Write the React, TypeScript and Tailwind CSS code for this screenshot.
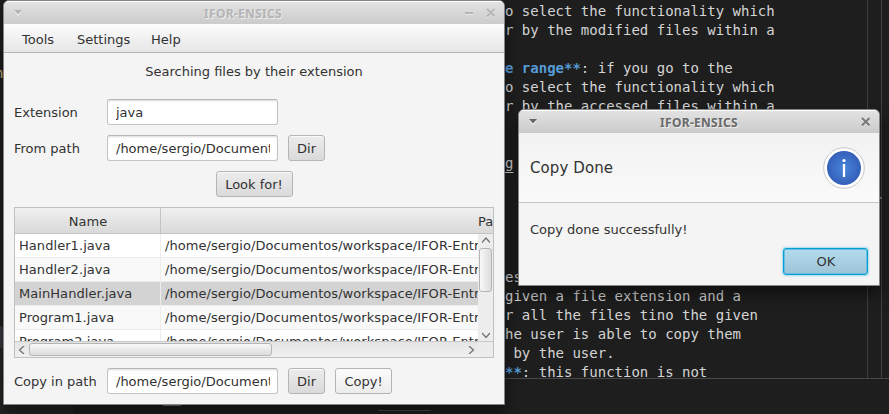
import React from "react";

const editorLines: { bold?: string; text: string; underline?: boolean }[] = [
  { text: "o select the functionality which" },
  { text: "r by the modified files within a" },
  { text: "" },
  { bold: "e range**", text: ": if you go to the" },
  { text: "o select the functionality which" },
  { text: "r by the accessed files within a" },
  { text: "" },
  { text: "" },
  { text: "g", underline: true },
  { text: "" },
  { text: "" },
  { text: "" },
  { text: "" },
  { text: "" },
  { text: "es" },
  { text: "given a file extension and a" },
  { text: "r all the files tino the given" },
  { text: "he user is able to copy them" },
  { text: " by the user." },
  { bold: "**", text: ": this function is not" },
];

const files = ["Handler1.java", "Handler2.java", "MainHandler.java", "Program1.java", "Program2.java"];

const rowColors = ["bg-white", "bg-[#f9f9f9]", "bg-[#d3d3d3]", "bg-[#f9f9f9]", "bg-white"];

function Chevron({ d }: { d: string }) {
  return (
    <svg width="8" height="8" viewBox="0 0 8 8" fill="none" stroke="#737373" strokeWidth="1.3">
      <path d={d} />
    </svg>
  );
}

function Button({ children, className }: { children: React.ReactNode; className: string }) {
  return (
    <button
      className={`h-[26px] shrink-0 rounded-[3px] border border-[#b5b5b5] bg-linear-to-b text-center leading-[25px] shadow-[inset_0_1px_0_#fafafa] ${className}`}
    >
      {children}
    </button>
  );
}

function Field({ value }: { value: string }) {
  return (
    <div className="h-[26px] w-[171px] shrink-0 rounded-[3px] border border-[#c4c4c4] border-t-[#b5b5b5] bg-white pr-[7px] pl-[8px] leading-[25px] shadow-[inset_0_2px_2px_-1px_#ddd]">
      <div className="overflow-hidden whitespace-nowrap">{value}</div>
    </div>
  );
}

function Editor() {
  return (
    <div className="flex h-[414px] w-[889px] flex-col overflow-hidden bg-[#1e1e1e]">
      <div className="flex h-[378px]">
        <div className="w-[505px] shrink-0 overflow-hidden pt-[64px] font-['DejaVu_Sans_Mono',monospace] text-[14px] leading-[19px] text-[#d7ba7d]">
          <div className="-ml-[5px]">n</div>
          <div className="mt-[243px] h-[22px] bg-[#37373d]" />
          <div className="h-[30px] w-[73px] bg-[#252526]" />
        </div>
        <pre className="w-[362px] shrink-0 pt-[2px] font-['DejaVu_Sans_Mono',monospace] text-[14px] leading-[19px] text-[#d4d4d4]">
          {editorLines.map((line, i) => (
            <div key={i} className="h-[19px]">
              {line.bold && <span className="font-bold text-[#569cd6]">{line.bold}</span>}
              <span className={line.underline ? "underline underline-offset-4" : ""}>{line.text}</span>
            </div>
          ))}
        </pre>
        <div className="w-[15px] shrink-0 border-x border-[#404040] pt-[197px]">
          <div className="-mr-px ml-auto h-[2px] w-[2px] bg-[#777]" />
        </div>
      </div>
      <div className="ml-[505px] h-px shrink-0 bg-[#484848]" />
      <div className="flex grow">
        <div className="w-[73px] bg-[#252526]" />
        <div className="mt-[25px] ml-[90px] h-[2px] w-[18px] bg-[#777]" />
        <div className="mt-[31px] ml-[197px] h-px w-[53px] bg-[#484848]" />
      </div>
    </div>
  );
}

function MainWindow() {
  return (
    <section className="absolute top-0 left-[3px] flex h-[405px] w-[502px] flex-col overflow-hidden rounded-t-[6px] border border-[#858585] bg-[#f4f4f4] shadow-[0_8px_14px_1px_rgba(0,0,0,0.45)]">
      <header className="flex h-[23px] shrink-0 items-center bg-linear-to-b from-[#e3e3e3] to-[#cbcbcb] pt-px pr-[8px] pl-[10px] shadow-[inset_0_1px_0_#fff]">
        <svg width="8" height="6" viewBox="0 0 8 6">
          <path d="M0 1h8L4 6z" fill="#f4f4f4" />
          <path d="M0 0h8L4 4.6z" fill="#b2b2b2" />
        </svg>
        <h1 className="grow pt-px text-center font-['Noto_Sans',sans-serif] text-[12px] font-bold tracking-[0.3px] text-[#b5b5b5] [text-shadow:1px_1px_0_#ececec]">
          IFOR-ENSICS
        </h1>
        <svg width="32" height="10" viewBox="0 0 32 10" fill="none">
          <path d="M1 6h8M23 2l7.500 7.500M30.500 2L23 9.500" stroke="#f0f0f0" strokeWidth="1.5" />
          <path d="M1 5h8M23 1l7.500 7.500M30.500 1L23 8.500" stroke="#b5b5b5" strokeWidth="2" />
        </svg>
      </header>
      <nav className="flex h-[29px] shrink-0 items-center border-b border-[#b5b5b5] bg-linear-to-b from-[#fcfcfc] to-[#e6e6e6] pt-[3px] pl-[18px]">
        <span className="w-[55px]">Tools</span>
        <span className="w-[74px]">Settings</span>
        <span>Help</span>
      </nav>
      <main className="flex flex-col px-[10px]">
        <p className="pt-[10px] text-center leading-[18px]">Searching files by their extension</p>
        <div className="mt-[18px] flex items-center">
          <label className="w-[93px] shrink-0 pt-px">Extension</label>
          <Field value="java" />
        </div>
        <div className="mt-[10px] flex items-center">
          <label className="w-[93px] shrink-0 pt-px">From path</label>
          <Field value="/home/sergio/Documentos" />
          <Button className="ml-[10px] w-[37px] from-[#ececec] to-[#dadada]">Dir</Button>
        </div>
        <div className="mt-[10px] flex justify-center">
          <Button className="w-[77px] from-[#ececec] to-[#dadada]">Look for!</Button>
        </div>
        <div className="mt-[10px] flex h-[151px] flex-col border border-[#c0c0c0] bg-white">
          <div className="flex h-[26px] shrink-0 overflow-hidden border-b border-[#c4c4c4] bg-linear-to-b from-[#f0f0f0] to-[#d9d9d9] leading-[28px] whitespace-nowrap">
            <div className="w-[146px] shrink-0 border-r border-[#c4c4c4] pl-px text-center">Name</div>
            <div className="pl-[317px]">Path</div>
          </div>
          <div className="flex h-[107px] shrink-0">
            <div className="w-[463px] shrink-0 overflow-hidden">
              {files.map((name, i) => (
                <div key={name} className={`flex h-[24px] border-b border-[#ededed] leading-[24px] tracking-[0.06px] ${rowColors[i]}`}>
                  <div className="w-[146px] shrink-0 border-r border-[#ededed] pl-[4px]">{name}</div>
                  <div className="overflow-hidden pl-[4px] whitespace-nowrap">
                    /home/sergio/Documentos/workspace/IFOR-Entr
                  </div>
                </div>
              ))}
            </div>
            <div className="flex w-[15px] flex-col items-center bg-[#ededed]">
              <div className="flex h-[14px] items-center">
                <Chevron d="M0 5.500L4 1l4 4.500" />
              </div>
              <div className="h-[44px] w-[13px] rounded-[3px] border border-[#b5b5b5] bg-linear-to-r from-[#f8f8f8] to-[#dcdcdc]" />
              <div className="mt-[39px]">
                <Chevron d="M0 2l4 4.500L8 2" />
              </div>
            </div>
          </div>
          <div className="flex grow border-t border-[#c8c8c8]">
            <div className="flex h-[15px] w-[463px] items-center bg-linear-to-b from-[#e4e4e4] to-[#f0f0f0]">
              <div className="flex w-[14px] justify-center">
                <Chevron d="M6 0L1.500 4L6 8" />
              </div>
              <div className="h-[13px] w-[243px] rounded-[3px] border border-[#b5b5b5] bg-linear-to-b from-[#f8f8f8] to-[#dcdcdc]" />
              <div className="mr-[3px] ml-auto">
                <Chevron d="M2 0l4.500 4L2 8" />
              </div>
            </div>
            <div className="grow bg-[#ececec]" />
          </div>
        </div>
        <div className="mt-[10px] flex items-center">
          <label className="w-[93px] shrink-0 pt-px">Copy in path</label>
          <Field value="/home/sergio/Documentos" />
          <Button className="ml-[10px] w-[37px] from-[#ececec] to-[#dadada]">Dir</Button>
          <Button className="ml-[10px] w-[57px] from-[#fcfcfc] to-[#ececec]">Copy!</Button>
        </div>
      </main>
    </section>
  );
}

function Dialog() {
  return (
    <section className="absolute top-[109px] left-[518px] flex h-[177px] w-[362px] flex-col overflow-hidden rounded-t-[6px] border border-[#858585] bg-[#f4f4f4] shadow-[0_8px_14px_1px_rgba(0,0,0,0.45)]">
      <header className="flex h-[23px] shrink-0 items-center bg-linear-to-b from-[#e3e3e3] to-[#cbcbcb] pt-px pr-[8px] pl-[10px] shadow-[inset_0_1px_0_#fff]">
        <svg width="8" height="6" viewBox="0 0 8 6">
          <path d="M0 1h8L4 6z" fill="#f4f4f4" />
          <path d="M0 0h8L4 4.6z" fill="#666" />
        </svg>
        <h2 className="grow pt-px text-center font-['Noto_Sans',sans-serif] text-[12px] font-bold tracking-[0.3px] text-[#696969] [text-shadow:1px_1px_0_#ececec]">
          IFOR-ENSICS
        </h2>
        <svg width="10" height="10" viewBox="0 0 10 10" fill="none">
          <path d="M1 2l7.500 7.500M8.500 2L1 9.500" stroke="#f0f0f0" strokeWidth="1.5" />
          <path d="M1 1l7.500 7.500M8.500 1L1 8.500" stroke="#777" strokeWidth="2" />
        </svg>
      </header>
      <div className="flex h-[70px] shrink-0 items-center justify-between border-b border-[#c4c4c4] bg-linear-to-b from-[#f2f2f2] to-[#fafafa] pr-[14px] pl-[11px] text-[15px]">
        <span className="pt-[2px] tracking-[0.1px]">Copy Done</span>
        <svg width="42" height="42" viewBox="0 0 42 42">
          <defs>
            <radialGradient id="info">
              <stop offset="0" stopColor="#4886d8" />
              <stop offset="1" stopColor="#345fb9" />
            </radialGradient>
          </defs>
          <circle cx="21" cy="21" r="20.3" fill="#fff" stroke="#c8c8c8" />
          <circle cx="21" cy="21" r="17" fill="url(#info)" />
          <circle cx="21" cy="13.500" r="1.600" fill="#fff" />
          <path d="M21 17V30" stroke="#fff" strokeWidth="2.300" />
        </svg>
      </div>
      <p className="pt-[18px] pl-[11px] leading-[18px]">Copy done successfully!</p>
      <button className="mt-[9px] mr-[11px] h-[27px] w-[85px] self-end rounded-[3px] border border-[#039ed3] bg-linear-to-b from-[#b3dcee] to-[#9dc3d7] pl-px shadow-[inset_0_0_0_1px_#69bddd,0_0_2px_1px_#a8d8eb]">
        OK
      </button>
    </section>
  );
}

export default function App() {
  return (
    <div className="relative h-[414px] w-[889px] overflow-hidden font-['DejaVu_Sans',sans-serif] text-[13px] text-[#323232]">
      <Editor />
      <MainWindow />
      <Dialog />
    </div>
  );
}
